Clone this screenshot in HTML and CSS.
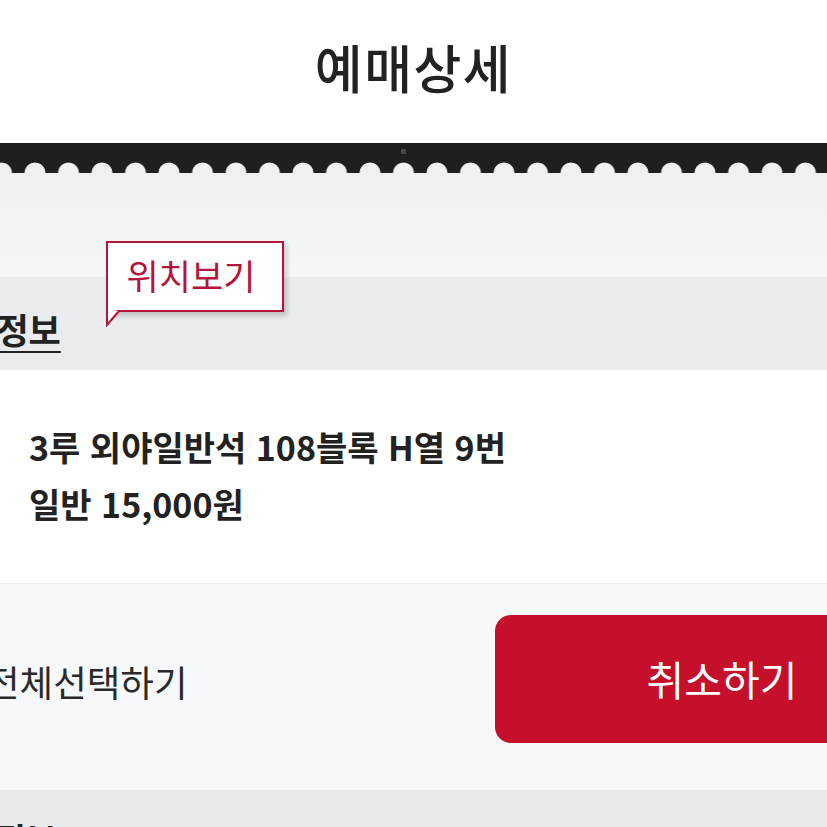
FILE: index.html
```html
<!DOCTYPE html>
<html lang="ko">
<head>
<meta charset="utf-8">
<title>예매상세</title>
<link rel="stylesheet" href="styles.css">
</head>
<body>
<div class="page">
  <header class="top">
    <h1 class="title">예매상세</h1>
  </header>
  <div class="ticket-edge"><span class="edge-dot"></span></div>
  <div class="spacer"></div>
  <section class="seat">
    <div class="seat-head">
      <h2 class="seat-title">좌석정보</h2>
      <div class="tip">
        <span class="tip-text">위치보기</span>
        <svg class="tip-tail" width="14" height="18" viewBox="0 0 14 18"><path d="M1 0 L1 16 L13 2" fill="#fff" stroke="#b3163a" stroke-width="2"/></svg>
      </div>
    </div>
    <div class="seat-body">
      <p class="seat-line">3루 외야일반석 108블록 H열 9번</p>
      <p class="seat-line">일반 15,000원</p>
    </div>
    <div class="actions">
      <span class="select-all">전체선택하기</span>
      <button class="cancel">취소하기</button>
    </div>
  </section>
  <section class="pay">
    <h2 class="pay-title">결제정보</h2>
  </section>
</div>
</body>
</html>
```
FILE: styles.css
```css
html, body {
  margin: 0;
  padding: 0;
  background: #ffffff;
}
body {
  width: 827px;
  height: 827px;
  overflow: hidden;
  font-family: "Noto Sans CJK KR", "Noto Sans", sans-serif;
  color: #222;
}
.page {
  width: 827px;
}
.top {
  height: 143px;
  display: flex;
  align-items: center;
  justify-content: center;
  background: #fff;
}
.title {
  margin: 0;
  font-size: 52px;
  font-weight: 500;
  color: #222;
  letter-spacing: 1.5px;
  padding-bottom: 10px;
  padding-left: 0;
}
.ticket-edge {
  position: relative;
  height: 30px;
  background-color: #1f1f21;
  background-image: radial-gradient(circle at 50% 100%, #eef0f2 0, #eef0f2 10px, rgba(238,240,242,0) 10.8px);
  background-size: 33.5px 30px;
  background-position: -15.25px 0;
  background-repeat: repeat-x;
}
.edge-dot {
  position: absolute;
  left: 401px;
  top: 6px;
  width: 5px;
  height: 5px;
  border-radius: 1px;
  background: #4a4a4c;
}
.spacer {
  height: 104px;
  background: linear-gradient(#eef0f2, #f5f6f8);
}
.seat-head {
  position: relative;
  height: 93px;
  background: #e9ebee;
  display: flex;
  align-items: center;
}
.seat-title {
  margin: 0 0 0 -68px;
  font-size: 35px;
  font-weight: 700;
  color: #222;
  text-decoration: underline;
  text-decoration-thickness: 2px;
  text-underline-offset: 7px;
  padding-top: 10px;
}
.tip {
  position: absolute;
  left: 106px;
  top: -36px;
  width: 174px;
  height: 67px;
  background: #fff;
  border: 2px solid #b3163a;
  box-shadow: 3px 4px 5px rgba(0, 0, 0, 0.18);
  display: flex;
  align-items: center;
  justify-content: center;
}
.tip-text {
  font-size: 35px;
  font-weight: 400;
  color: #b3163a;
  line-height: 1;
  margin-top: -4px;
  margin-left: -8px;
}
.tip-tail {
  position: absolute;
  left: -2px;
  bottom: -17px;
}
.seat-body {
  height: 214px;
  background: #fff;
  border-bottom: 1px solid #ebecee;
  padding: 48px 0 0 29px;
  box-sizing: border-box;
}
.seat-line {
  margin: 0;
  font-size: 34px;
  font-weight: 700;
  line-height: 57px;
  color: #222;
}
.actions {
  height: 206px;
  background: #f7f8fa;
  display: flex;
  align-items: center;
  justify-content: space-between;
  padding-bottom: 12px;
  box-sizing: border-box;
}
.select-all {
  margin-left: -14px;
  font-size: 36.5px;
  font-weight: 400;
  color: #2a2a2a;
  margin-top: 0;
}
.cancel {
  flex: none;
  width: 454px;
  height: 128px;
  margin-right: -122px;
  margin-top: -4px;
  border: 0;
  border-radius: 16px;
  background: #c60f2b;
  color: #fff;
  font-family: "Noto Sans CJK KR", "Noto Sans", sans-serif;
  font-size: 41px;
  font-weight: 400;
  padding-bottom: 4px;
}
.pay {
  height: 200px;
  background: #e9eaed;
  padding: 24px 0 0 0;
  box-sizing: border-box;
}
.pay-title {
  margin: 0 0 0 -68px;
  font-size: 34px;
  font-weight: 700;
  color: #222;
}
```
